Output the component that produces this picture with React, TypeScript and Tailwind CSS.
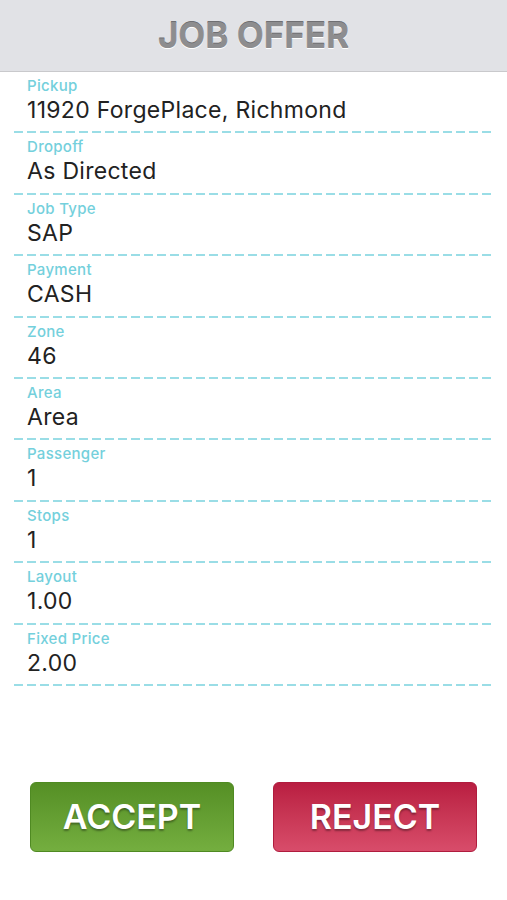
import React from "react";

const fields: { label: string; value: string }[] = [
  { label: "Pickup", value: "11920 ForgePlace, Richmond" },
  { label: "Dropoff", value: "As Directed" },
  { label: "Job Type", value: "SAP" },
  { label: "Payment", value: "CASH" },
  { label: "Zone", value: "46" },
  { label: "Area", value: "Area" },
  { label: "Passenger", value: "1" },
  { label: "Stops", value: "1" },
  { label: "Layout", value: "1.00" },
  { label: "Fixed Price", value: "2.00" },
];

function DashedLine() {
  return (
    <div className="mx-[14px] h-[2px] bg-[repeating-linear-gradient(90deg,#9adde6_0px,#9adde6_9px,transparent_9px,transparent_13px)]" />
  );
}

export default function App() {
  return (
    <div className="w-[507px] h-[900px] bg-white flex flex-col font-['Inter','Liberation_Sans',sans-serif]">
      {/* Header */}
      <div className="h-[72px] shrink-0 bg-[#e1e2e6] border-b border-[#c9c9cc] flex items-center justify-center">
        <h1 className="text-[35px] font-bold text-[#8d8d8f] tracking-[0px] [text-shadow:0_1px_0_#ffffff,0_-1px_0_#6f6f72]">
          JOB OFFER
        </h1>
      </div>

      {/* Fields */}
      <div className="flex flex-col">
        {fields.map((f) => (
          <div key={f.label} className="h-[61.4px] flex flex-col">
            <div className="px-[27px] pt-[5px] flex-1">
              <div className="text-[15px] leading-[18px] font-medium tracking-[0.3px] text-[#74d0dc]">{f.label}</div>
              <div className="mt-[2px] text-[23px] leading-[27px] tracking-[0.3px] text-[#222222]">{f.value}</div>
            </div>
            <DashedLine />
          </div>
        ))}
      </div>

      {/* Actions */}
      <div className="mt-[96px] flex justify-between px-[30px]">
        <button className="w-[204px] h-[70px] rounded-[6px] border border-[#4f8a22] bg-gradient-to-b from-[#558f25] to-[#74ae3f] text-white text-[34px] font-semibold tracking-[0px] [text-shadow:0_2px_2px_rgba(0,0,0,0.35)]">
          ACCEPT
        </button>
        <button className="w-[204px] h-[70px] rounded-[6px] border border-[#b01c3e] bg-gradient-to-b from-[#b91d41] to-[#d84c6a] text-white text-[34px] font-semibold tracking-[0px] [text-shadow:0_2px_2px_rgba(0,0,0,0.35)]">
          REJECT
        </button>
      </div>
    </div>
  );
}
